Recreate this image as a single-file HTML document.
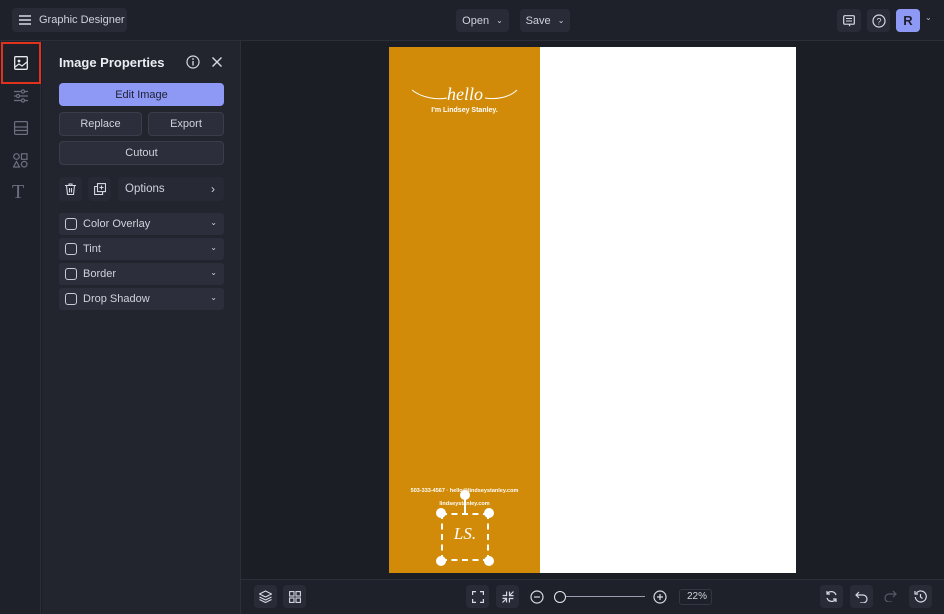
<!DOCTYPE html>
<html><head><style>
*{box-sizing:border-box;margin:0;padding:0}
body{width:944px;height:614px;overflow:hidden;background:#1c1e26;font-family:"Liberation Sans",sans-serif;color:#d8dae3;position:relative;font-size:11px}
.abs{position:absolute}
.btn{position:absolute;background:#2c2f3b;border-radius:4px;display:flex;align-items:center;justify-content:center;color:#d0d2db;white-space:nowrap}
.ob{border:1px solid #3a3d4a;background:#2c2f3b}
.row{position:absolute;left:59px;width:165px;height:22px;background:#2c2f3b;border-radius:3px;display:flex;align-items:center;padding-left:6px;font-size:11px;color:#d0d2db}
.cb{width:12px;height:12px;border:1.3px solid #c9cbd4;border-radius:3px;margin-right:6px}
.chev{position:absolute;right:7px;top:5px}
svg{display:block}
</style></head><body>
<div class="abs" style="left:0;top:0;width:944px;height:41px;background:#1f212a;border-bottom:1px solid #2c2f3a"></div>
<div class="btn" style="left:12px;top:8px;width:115px;height:24px;justify-content:flex-start;padding-left:7px;background:#292c37">
<svg width="12" height="10"><path d="M0 1h12M0 5h12M0 9h12" stroke="#d8dae3" stroke-width="1.4"/></svg>
<span style="margin-left:8px;font-size:11px">Graphic Designer</span></div>
<div class="btn" style="left:456px;top:9px;width:53px;height:23px;background:#292c37">Open&nbsp;<span style="font-size:8px;margin-left:4px">&#8964;</span></div>
<div class="btn" style="left:520px;top:9px;width:50px;height:23px;background:#292c37">Save&nbsp;<span style="font-size:8px;margin-left:4px">&#8964;</span></div>
<div class="btn" style="left:837px;top:9px;width:24px;height:23px;background:#292c37"><svg width="12" height="12"><rect x="0.7" y="0.7" width="10.6" height="8.5" rx="1" fill="none" stroke="#d8dae3" stroke-width="1.2"/><path d="M3 3.5h6M3 6h6M6 9.2l1 2" stroke="#d8dae3" stroke-width="1.1"/></svg></div>
<div class="btn" style="left:867px;top:9px;width:23px;height:23px;background:#292c37"><svg width="14" height="14"><circle cx="7" cy="7" r="6" fill="none" stroke="#d8dae3" stroke-width="1.2"/><text x="7" y="10.5" font-size="9" text-anchor="middle" fill="#d8dae3" font-family="Liberation Sans">?</text></svg></div>
<div class="btn" style="left:896px;top:9px;width:24px;height:23px;background:#8d99f5;color:#1e2030;font-weight:bold;font-size:13px">R</div>
<div class="abs" style="left:925px;top:13px;font-size:8px;color:#bbb">&#8964;</div>
<div class="abs" style="left:0;top:41px;width:41px;height:573px;background:#1f212a;border-right:1px solid #2c2f3a"></div>
<div class="abs" style="left:1px;top:42px;width:40px;height:42px;border:2px solid #e0321c"></div>
<svg class="abs" style="left:14px;top:56px" width="14" height="14"><rect x="0.7" y="0.7" width="12.6" height="12.6" rx="1" fill="none" stroke="#e8e9ef" stroke-width="1.3"/><circle cx="5" cy="5" r="1.4" fill="#e8e9ef"/><path d="M1 11l4-3 3 2 5-4" fill="none" stroke="#e8e9ef" stroke-width="1.2"/></svg>
<svg class="abs" style="left:14px;top:89px" width="14" height="14" stroke="#6b6f80" stroke-width="1.2" fill="none"><path d="M0 2.5h14M0 7h14M0 11.5h14"/><circle cx="9" cy="2.5" r="1.6" fill="#1f212a"/><circle cx="4" cy="7" r="1.6" fill="#1f212a"/><circle cx="9" cy="11.5" r="1.6" fill="#1f212a"/></svg>
<svg class="abs" style="left:14px;top:121px" width="14" height="14" stroke="#6b6f80" stroke-width="1.2" fill="none"><rect x="0.6" y="0.6" width="12.8" height="12.8" rx="1"/><path d="M0.6 6h12.8M0.6 9.5h12.8"/></svg>
<svg class="abs" style="left:13px;top:153px" width="15" height="15" stroke="#6b6f80" stroke-width="1.2" fill="none"><circle cx="3.5" cy="3.5" r="2.8"/><rect x="8.5" y="0.8" width="5.5" height="5.5"/><path d="M3.5 8.5l3 5.5h-6z"/><circle cx="11.2" cy="11.2" r="2.8"/></svg>
<div class="abs" style="left:12px;top:181px;font-family:'Liberation Serif',serif;font-size:20px;color:#6b6f80">T</div>
<div class="abs" style="left:42px;top:41px;width:199px;height:573px;background:#22242e;border-right:1px solid #2c2f3a"></div>
<div class="abs" style="left:59px;top:55px;font-size:13px;font-weight:bold;color:#eceef4">Image Properties</div>
<svg class="abs" style="left:186px;top:55px" width="14" height="14"><circle cx="7" cy="7" r="6" fill="none" stroke="#d8dae3" stroke-width="1.2"/><path d="M7 6v4.5" stroke="#d8dae3" stroke-width="1.3"/><circle cx="7" cy="4" r="0.9" fill="#d8dae3"/></svg>
<svg class="abs" style="left:212px;top:57px" width="10" height="10"><path d="M0.5 0.5l9 9M9.5 0.5l-9 9" stroke="#d8dae3" stroke-width="1.4"/></svg>
<div class="btn" style="left:59px;top:83px;width:165px;height:23px;background:#8d99f5;color:#1e2030">Edit Image</div>
<div class="btn ob" style="left:59px;top:112px;width:83px;height:24px">Replace</div>
<div class="btn ob" style="left:148px;top:112px;width:76px;height:24px">Export</div>
<div class="btn ob" style="left:59px;top:141px;width:165px;height:24px">Cutout</div>
<div class="btn" style="left:59px;top:177px;width:23px;height:24px;background:#272a35"><svg width="11" height="12" stroke="#d8dae3" stroke-width="1.1" fill="none"><path d="M0 2.5h11M4 2.5V1h3v1.5M1.5 2.5l1 9h6l1-9M4.5 5v4.5M6.5 5v4.5"/></svg></div>
<div class="btn" style="left:88px;top:177px;width:23px;height:24px;background:#272a35"><svg width="12" height="12" stroke="#d8dae3" stroke-width="1.1" fill="none"><rect x="3.5" y="0.6" width="8" height="8"/><path d="M3.5 3.5H0.6v8h8V8.6M7.5 2.5v4M5.5 4.5h4"/></svg></div>
<div class="btn" style="left:118px;top:177px;width:106px;height:24px;background:#272a35;justify-content:space-between;padding:0 9px 0 7px;font-size:11.5px"><span>Options</span><span style="font-size:12px">&#8250;</span></div>
<div class="row" style="top:213px"><div class="cb"></div>Color Overlay<span class="chev" style="font-size:8px">&#8964;</span></div>
<div class="row" style="top:238px"><div class="cb"></div>Tint<span class="chev" style="font-size:8px">&#8964;</span></div>
<div class="row" style="top:263px"><div class="cb"></div>Border<span class="chev" style="font-size:8px">&#8964;</span></div>
<div class="row" style="top:288px"><div class="cb"></div>Drop Shadow<span class="chev" style="font-size:8px">&#8964;</span></div>
<div class="abs" style="left:389px;top:47px;width:407px;height:526px;background:#fff"></div>
<div class="abs" style="left:389px;top:47px;width:151px;height:526px;background:#d18b08"></div>
<svg class="abs" style="left:410px;top:80px" width="110" height="24"><path d="M2 10c10 8 25 10 35 8M75 18c12 2 25-1 32-8" fill="none" stroke="#fff" stroke-width="1"/><text x="55" y="20" text-anchor="middle" font-family="Liberation Serif" font-style="italic" font-size="18" fill="#fff">hello</text></svg>
<div class="abs" style="left:389px;top:107px;width:151px;text-align:center;color:#fff;font-size:7px;font-weight:bold">I'm Lindsey Stanley.</div>
<div class="abs" style="left:389px;top:488px;width:151px;text-align:center;color:#fff;font-size:5.5px;font-weight:bold">503-333-4567 · hello@lindseystanley.com</div>
<div class="abs" style="left:389px;top:501px;width:151px;text-align:center;color:#fff;font-size:5.5px;font-weight:bold">lindseystanley.com</div>
<div class="abs" style="left:441px;top:513px;width:48px;height:48px;border:2px dashed #fff"></div>
<div class="abs" style="left:441px;top:524px;width:48px;text-align:center;font-family:'Liberation Serif',serif;font-style:italic;color:#fff;font-size:17px">LS.</div>
<div class="abs" style="left:436px;top:508px;width:10px;height:10px;border-radius:50%;background:#fff"></div>
<div class="abs" style="left:484px;top:508px;width:10px;height:10px;border-radius:50%;background:#fff"></div>
<div class="abs" style="left:436px;top:556px;width:10px;height:10px;border-radius:50%;background:#fff"></div>
<div class="abs" style="left:484px;top:556px;width:10px;height:10px;border-radius:50%;background:#fff"></div>
<div class="abs" style="left:460px;top:490px;width:10px;height:10px;border-radius:50%;background:#fff"></div>
<div class="abs" style="left:464px;top:499px;width:2px;height:14px;background:#fff"></div>
<div class="abs" style="left:241px;top:579px;width:703px;height:35px;background:#1f212a;border-top:1px solid #2c2f3a"></div>
<div class="btn" style="left:254px;top:585px;width:23px;height:23px;background:#292c37"><svg width="13" height="13" stroke="#d8dae3" stroke-width="1.1" fill="none"><path d="M6.5 1l6 3-6 3-6-3zM0.5 7l6 3 6-3M0.5 9.5l6 3 6-3"/></svg></div>
<div class="btn" style="left:283px;top:585px;width:23px;height:23px;background:#292c37"><svg width="12" height="12" stroke="#d8dae3" stroke-width="1.1" fill="none"><rect x="0.6" y="0.6" width="4.4" height="4.4"/><rect x="7" y="0.6" width="4.4" height="4.4"/><rect x="0.6" y="7" width="4.4" height="4.4"/><rect x="7" y="7" width="4.4" height="4.4"/></svg></div>
<div class="btn" style="left:466px;top:585px;width:23px;height:23px;background:#292c37"><svg width="12" height="12" stroke="#d8dae3" stroke-width="1.2" fill="none"><path d="M0.6 4V0.6H4M8 0.6h3.4V4M11.4 8v3.4H8M4 11.4H0.6V8"/></svg></div>
<div class="btn" style="left:496px;top:585px;width:23px;height:23px;background:#292c37"><svg width="12" height="12" stroke="#d8dae3" stroke-width="1.2" fill="none"><path d="M0.6 4.5h4v-4M7.5 0.6v4h4M11.4 7.5h-4v4M4.5 11.4v-4h-4M7.5 4.5l4-4M4.5 7.5l-4 4"/></svg></div>
<svg class="abs" style="left:530px;top:590px" width="14" height="14"><circle cx="7" cy="7" r="6" fill="none" stroke="#d8dae3" stroke-width="1.2"/><path d="M4 7h6" stroke="#d8dae3" stroke-width="1.2"/></svg>
<div class="abs" style="left:560px;top:596px;width:85px;height:1px;background:#9a9db0"></div>
<div class="abs" style="left:554px;top:591px;width:12px;height:12px;border-radius:50%;border:1.5px solid #e8e9ef;background:#1f212a"></div>
<svg class="abs" style="left:653px;top:590px" width="14" height="14"><circle cx="7" cy="7" r="6" fill="none" stroke="#d8dae3" stroke-width="1.2"/><path d="M4 7h6M7 4v6" stroke="#d8dae3" stroke-width="1.2"/></svg>
<div class="abs" style="left:679px;top:589px;width:33px;height:16px;border:1px solid #333645;border-radius:3px;font-size:10px;text-align:right;padding-right:4px;line-height:14px;color:#d0d2db">22%</div>
<div class="btn" style="left:820px;top:585px;width:23px;height:23px;background:#292c37"><svg width="13" height="13" stroke="#d8dae3" stroke-width="1.2" fill="none"><path d="M11 5A5 5 0 0 0 2 4M2 8a5 5 0 0 0 9 1M2 1v3h3M11 12V9H8"/></svg></div>
<div class="btn" style="left:850px;top:585px;width:23px;height:23px;background:#292c37"><svg width="13" height="12" stroke="#d8dae3" stroke-width="1.2" fill="none"><path d="M4 1L1 4l3 3M1 4h7a4 4 0 0 1 0 8H5"/></svg></div>
<svg class="abs" style="left:884px;top:590px" width="13" height="12" stroke="#555968" stroke-width="1.2" fill="none"><path d="M9 1l3 3-3 3M12 4H5a4 4 0 0 0 0 8h3"/></svg>
<div class="btn" style="left:909px;top:585px;width:23px;height:23px;background:#292c37"><svg width="13" height="13" stroke="#d8dae3" stroke-width="1.2" fill="none"><path d="M2.5 3A5.5 5.5 0 1 1 1.3 7M1 1v3h3M6.5 4v3l2 1.5"/></svg></div>
</body></html>
